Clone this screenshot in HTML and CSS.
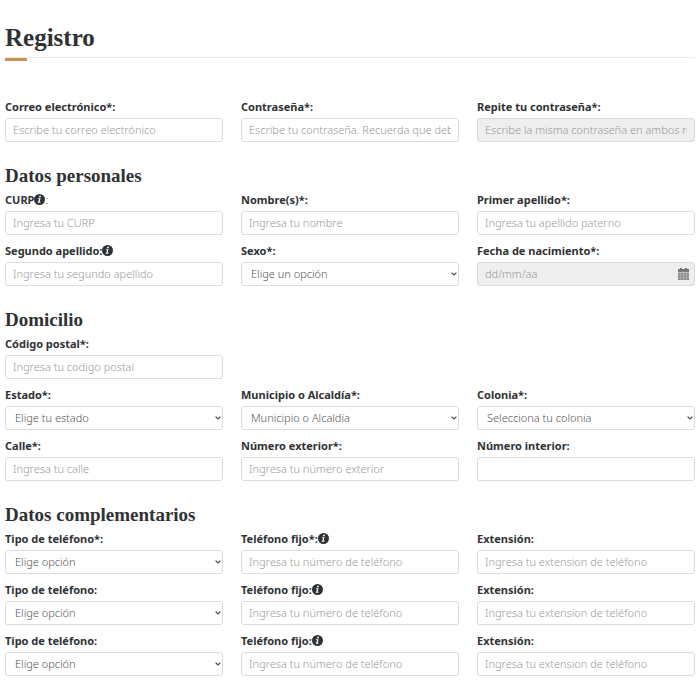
FILE: index.html
```html
<!DOCTYPE html>
<html lang="es">
<head>
<meta charset="utf-8">
<meta name="viewport" content="width=device-width, initial-scale=1">
<title>Registro</title>
<link rel="stylesheet" href="styles.css">
</head>
<body>
<svg class="sprite" aria-hidden="true">
  <symbol id="info" viewBox="0 0 20 20">
    <circle cx="10" cy="10" r="10" fill="#303234"/>
    <path fill="#fff" d="M9.7 3h3.1l-.6 2.7H9.1zM7.2 7.5h4.7l-1.6 6.8h1.6l-.4 1.8H6.7l.4-1.8h.8l1.2-5H6.8z"/>
  </symbol>
  <symbol id="chevron" viewBox="0 0 6 4">
    <path fill="none" stroke="#444" stroke-width="1.1" d="M.6.6L3 3 5.400.6"/>
  </symbol>
</svg>
<main class="page">
  <h1 class="title">Registro</h1>
  <form>
    <section class="grid">
      <div class="field"><label for="correo">Correo electrónico*:</label><input id="correo" type="email" placeholder="Escribe tu correo electrónico"></div>
      <div class="field"><label for="clave">Contraseña*:</label><input id="clave" type="password" placeholder="Escribe tu contraseña. Recuerda que debe tener 8 caracteres"></div>
      <div class="field"><label for="clave2">Repite tu contraseña*:</label><input id="clave2" type="password" placeholder="Escribe la misma contraseña en ambos recuadros" disabled></div>
    </section>

    <section class="group">
      <h2>Datos personales</h2>
      <div class="grid">
        <div class="field"><label for="curp">CURP<svg class="info"><use href="#info"/></svg><span class="thin">:</span></label><input id="curp" type="text" placeholder="Ingresa tu CURP"></div>
        <div class="field"><label for="nombre">Nombre(s)*:</label><input id="nombre" type="text" placeholder="Ingresa tu nombre"></div>
        <div class="field"><label for="apellido1">Primer apellido*:</label><input id="apellido1" type="text" placeholder="Ingresa tu apellido paterno"></div>
        <div class="field"><label for="apellido2">Segundo apellido:<svg class="info"><use href="#info"/></svg></label><input id="apellido2" type="text" placeholder="Ingresa tu segundo apellido"></div>
        <div class="field"><label for="sexo">Sexo*:</label><div class="control"><select id="sexo"><option>Elige un opción</option></select><svg class="chevron"><use href="#chevron"/></svg></div></div>
        <div class="field"><label for="fecha">Fecha de nacimiento*:</label>
          <div class="control">
            <input id="fecha" type="text" placeholder="dd/mm/aa" disabled>
            <svg class="calendar" viewBox="0 0 11 12" aria-hidden="true">
              <path fill="#777" d="M0 1h2V0h2v1h3V0h2v1h2v3H0z"/>
              <path fill="#8a8a8a" d="M0 4.500h11V12H0z"/>
              <path stroke="#c4c4c4" stroke-width=".5" d="M0 4.300h11M0 7h11M0 9.500h11M2.700 5v7M5.500 5v7M8.300 5v7"/>
            </svg>
          </div>
        </div>
      </div>
    </section>

    <section class="group">
      <h2>Domicilio</h2>
      <div class="grid">
        <div class="field"><label for="cp">Código postal*:</label><input id="cp" type="text" placeholder="Ingresa tu codigo postal"></div>
        <div class="field row-start"><label for="estado">Estado*:</label><div class="control"><select id="estado"><option>Elige tu estado</option></select><svg class="chevron"><use href="#chevron"/></svg></div></div>
        <div class="field"><label for="municipio">Municipio o Alcaldía*:</label><div class="control"><select id="municipio"><option>Municipio o Alcaldía</option></select><svg class="chevron"><use href="#chevron"/></svg></div></div>
        <div class="field"><label for="colonia">Colonia*:</label><div class="control"><select id="colonia"><option>Selecciona tu colonia</option></select><svg class="chevron"><use href="#chevron"/></svg></div></div>
        <div class="field"><label for="calle">Calle*:</label><input id="calle" type="text" placeholder="Ingresa tu calle"></div>
        <div class="field"><label for="exterior">Número exterior*:</label><input id="exterior" type="text" placeholder="Ingresa tu número exterior"></div>
        <div class="field"><label for="interior">Número interior:</label><input id="interior" type="text"></div>
      </div>
    </section>

    <section class="group">
      <h2>Datos complementarios</h2>
      <div class="grid">
        <div class="field"><label for="tipo1">Tipo de teléfono*:</label><div class="control"><select id="tipo1"><option>Elige opción</option></select><svg class="chevron"><use href="#chevron"/></svg></div></div>
        <div class="field"><label for="tel1">Teléfono fijo*:<svg class="info"><use href="#info"/></svg></label><input id="tel1" type="tel" placeholder="Ingresa tu número de teléfono"></div>
        <div class="field"><label for="ext1">Extensión:</label><input id="ext1" type="text" placeholder="Ingresa tu extension de teléfono"></div>
        <div class="field"><label for="tipo2">Tipo de teléfono:</label><div class="control"><select id="tipo2"><option>Elige opción</option></select><svg class="chevron"><use href="#chevron"/></svg></div></div>
        <div class="field"><label for="tel2">Teléfono fijo:<svg class="info"><use href="#info"/></svg></label><input id="tel2" type="tel" placeholder="Ingresa tu número de teléfono"></div>
        <div class="field"><label for="ext2">Extensión:</label><input id="ext2" type="text" placeholder="Ingresa tu extension de teléfono"></div>
        <div class="field"><label for="tipo3">Tipo de teléfono:</label><div class="control"><select id="tipo3"><option>Elige opción</option></select><svg class="chevron"><use href="#chevron"/></svg></div></div>
        <div class="field"><label for="tel3">Teléfono fijo:<svg class="info"><use href="#info"/></svg></label><input id="tel3" type="tel" placeholder="Ingresa tu número de teléfono"></div>
        <div class="field"><label for="ext3">Extensión:</label><input id="ext3" type="text" placeholder="Ingresa tu extension de teléfono"></div>
      </div>
    </section>
  </form>
</main>
</body>
</html>
```
FILE: styles.css
```css
* { box-sizing: border-box; }

body {
  margin: 0;
  background: #fff;
  color: #303234;
  font-family: "Noto Sans", "Open Sans", sans-serif;
  font-size: 11px;
}

.sprite { display: none; }

.page { padding: 22px 5px 16px; }

h1, h2 {
  margin: 0;
  font-family: "Liberation Serif", serif;
  font-weight: 700;
}

.title {
  position: relative;
  margin-bottom: 40px;
  padding-bottom: 3px;
  border-bottom: 1px solid #ebebeb;
  font-size: 25px;
  line-height: 32px;
}

.title::after {
  content: "";
  position: absolute;
  left: 0;
  bottom: -4px;
  width: 22px;
  height: 3px;
  background: #c69256;
}

h2 {
  margin-bottom: 3px;
  font-size: 19px;
  line-height: 24px;
}

.group { margin-top: 22px; }

.grid {
  display: grid;
  grid-template-columns: repeat(3, minmax(0, 1fr));
  gap: 7px 18px;
}

.row-start { grid-column-start: 1; }

.field {
  display: flex;
  flex-direction: column;
  gap: 2px;
}

label {
  display: flex;
  align-items: center;
  height: 18px;
  font-weight: 700;
  line-height: 18px;
}

.thin { font-weight: 300; }

.info {
  width: 11px;
  height: 11px;
  margin-bottom: 2px;
}

input, select {
  display: block;
  width: 100%;
  height: 24px;
  border: 1px solid #dcdcdc;
  border-radius: 3px;
  background: #fff;
  color: #555;
  font: 300 11px "Noto Sans", "Open Sans", sans-serif;
}

input { padding: 0 7px 1px; }

select {
  appearance: none;
  padding: 0 16px 1px 9px;
}

input::placeholder { color: #999; opacity: 1; }

input:disabled { background: #eee; }

.control { position: relative; }

.chevron {
  position: absolute;
  top: 10px;
  right: 2px;
  width: 6px;
  height: 4px;
  pointer-events: none;
}

.calendar {
  position: absolute;
  top: 6px;
  right: 6px;
  width: 11px;
  height: 12px;
}
```
